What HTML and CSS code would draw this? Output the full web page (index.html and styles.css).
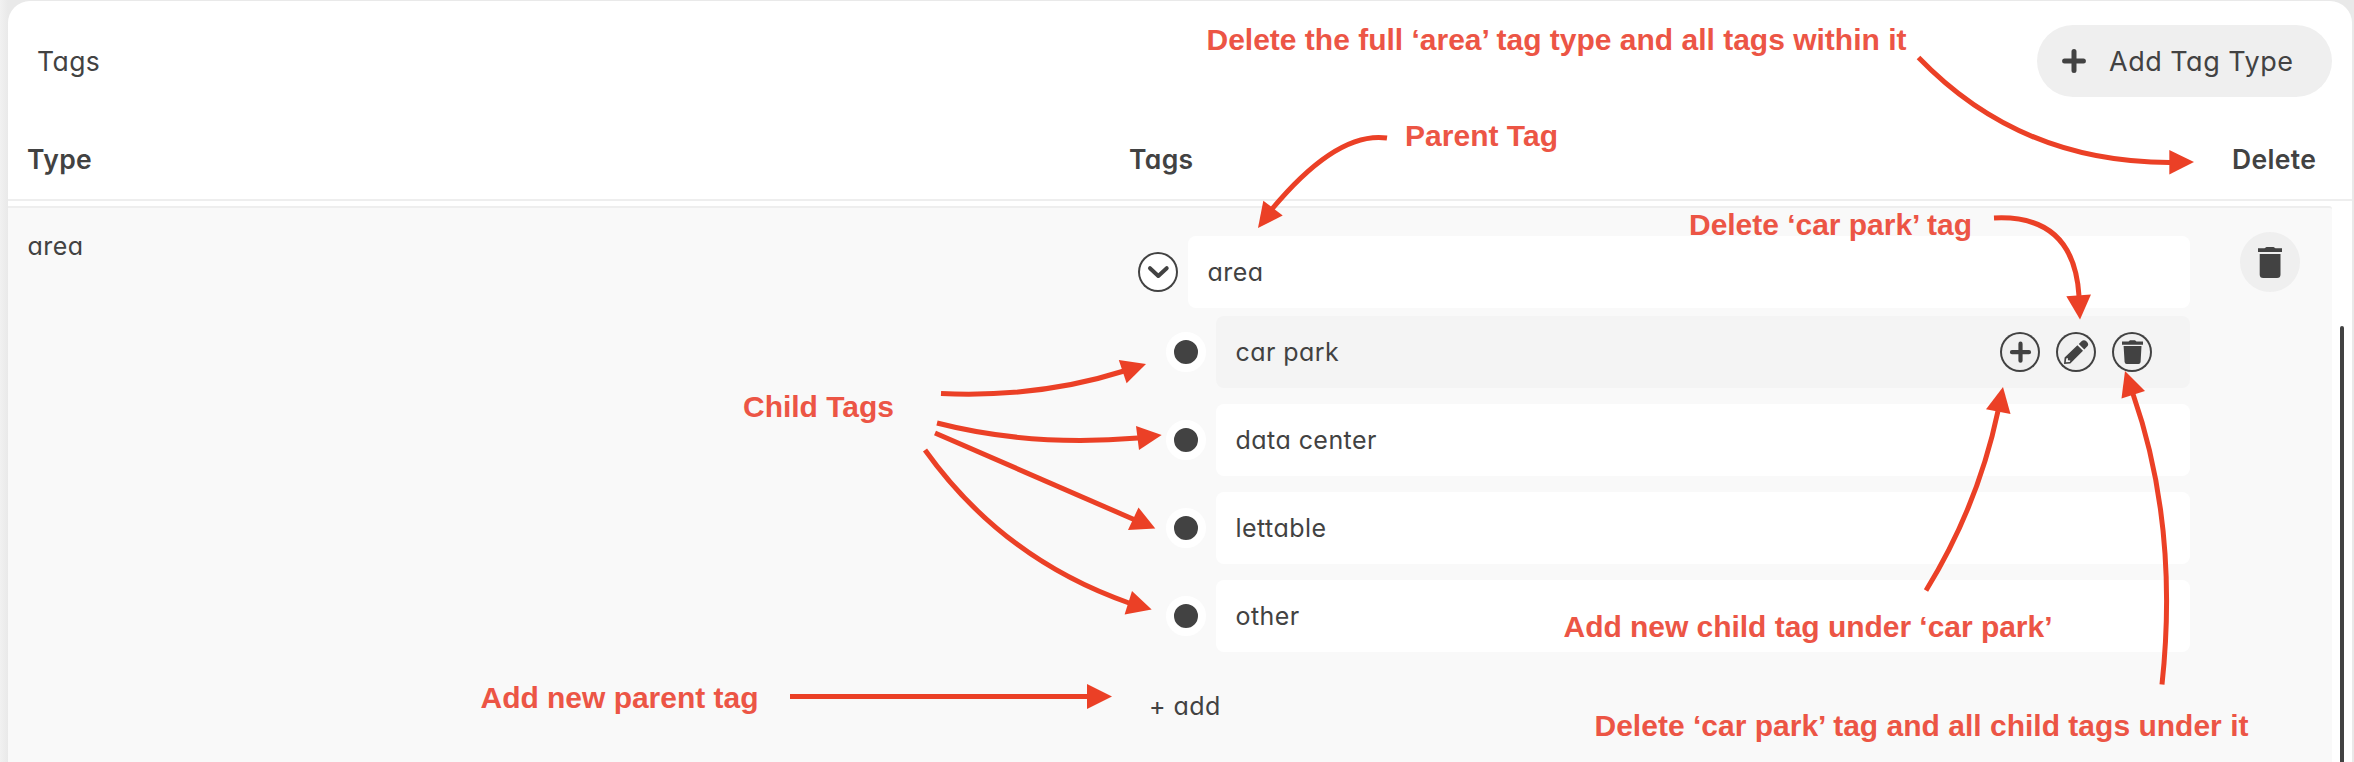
FILE: index.html
```html
<!DOCTYPE html>
<html lang="en">
<head>
<meta charset="utf-8">
<title>Tags</title>
<link rel="stylesheet" href="styles.css">
</head>
<body>
<main class="panel">
  <header class="panel-header">
    <h1 class="title">Tags</h1>
    <button class="add-type">
      <svg class="add-type-icon" viewBox="0 0 24 24"><path d="M12 2.6V21.4M2.6 12H21.4"/></svg>
      <span class="add-type-label">Add Tag Type</span>
    </button>
  </header>
  <div class="columns">
    <span>Type</span><span>Tags</span><span>Delete</span>
  </div>
  <div class="scroller">
    <section class="row">
      <div class="type-name">area</div>
      <div class="tree">
        <div class="tag-line">
          <span class="toggle"><svg viewBox="0 0 40 40"><path d="M12 16.2L20.3 24L28.7 16.2"/></svg></span>
          <div class="tag"><span>area</span></div>
        </div>
        <div class="children">
          <div class="tag-line">
            <span class="bullet"></span>
            <div class="tag active"><span>car park</span>
              <div class="actions">
                <span class="action"><svg viewBox="0 0 40 40"><path class="plus" d="M20.5 11.7V28.7M12 20.2H29"/></svg></span>
                <span class="action"><svg viewBox="0 0 40 40"><path class="solid" d="M8 32L8.6 25.6L21.4 13.2L27 18.7L14.3 31.4ZM22.8 12L25.5 9.2Q28 7 30.6 9.4Q33.2 12 31.6 14L28.3 17.4Z"/><path class="hole" d="M10.2 26.6L9.8 30.2L13.8 30L14.4 28.4L12 28.2L11.8 26Z"/></svg></span>
                <span class="action"><svg viewBox="0 0 40 40"><path class="solid" d="M10 9.5H16.5L18 8.2H23L24.5 9.5H31V12.8H10ZM11.6 14H29.5L28.6 30Q28.4 32 26.5 32H14.7Q12.8 32 12.6 30Z"/></svg></span>
              </div>
            </div>
          </div>
          <div class="tag-line"><span class="bullet"></span><div class="tag"><span>data center</span></div></div>
          <div class="tag-line"><span class="bullet"></span><div class="tag"><span>lettable</span></div></div>
          <div class="tag-line"><span class="bullet"></span><div class="tag"><span>other</span></div></div>
        </div>
        <div class="add-parent">+ add</div>
      </div>
      <div class="delete-cell">
        <span class="delete-btn"><svg viewBox="0 0 60 60"><path class="solid" d="M18 16.2H24.5L26.5 15H33.5L35.5 16.2H42V20H18ZM19.7 22H40.5V42.5Q40.5 46 37 46H23.2Q19.7 46 19.7 42.5Z"/></svg></span>
      </div>
    </section>
    <div class="scrollbar"><div class="thumb"></div></div>
  </div>
</main>
<svg class="notes" viewBox="0 0 2354 762">
  <g class="lines">
    <path d="M1918.5 57.5Q2020 163 2171 162.5"/>
    <path d="M1387 138Q1337 131 1272 209"/>
    <path d="M1994 218Q2074 214 2079 296"/>
    <path d="M941 393.5Q1039 398 1124 371"/>
    <path d="M937 423Q1030 447 1138 438"/>
    <path d="M935 433L1134 519.5"/>
    <path d="M925 450Q1003 559 1129 603"/>
    <path d="M790 696.5H1088"/>
    <path d="M1926 590.5Q1978 506 1998 411"/>
    <path d="M2162 684.5Q2179 526 2133 394"/>
  </g>
  <g class="heads">
    <path d="M2194 162L2169.3 150V174.5Z"/>
    <path d="M1258 228L1263.3 200.7L1282.7 215.5Z"/>
    <path d="M2080 319.5L2066.3 296.3L2091 294.5Z"/>
    <path d="M1146 364L1118.8 360L1126.6 383.3Z"/>
    <path d="M1161.7 435L1136 426L1139 450Z"/>
    <path d="M1155.3 528.5L1138.5 507.5L1128 530Z"/>
    <path d="M1151.7 609.5L1132 591L1124.6 614.5Z"/>
    <path d="M1112 696.5L1087 684V709Z"/>
    <path d="M2003 387L1986 409.3L2010.5 414Z"/>
    <path d="M2125 371L2121.5 398.5L2145 391Z"/>
  </g>
  <g class="captions">
    <text x="1206.5" y="50" textLength="700">Delete the full ‘area’ tag type and all tags within it</text>
    <text x="1405" y="146" textLength="153">Parent Tag</text>
    <text x="1689" y="235" textLength="283">Delete ‘car park’ tag</text>
    <text x="743" y="417" textLength="151">Child Tags</text>
    <text x="480.5" y="708" textLength="278">Add new parent tag</text>
    <text x="1563.5" y="637" textLength="489">Add new child tag under ‘car park’</text>
    <text x="1594.5" y="736" textLength="654">Delete ‘car park’ tag and all child tags under it</text>
  </g>
</svg>
</body>
</html>
```
FILE: styles.css
```css
* { box-sizing: border-box; }
body {
  margin: 0;
  height: 762px;
  padding: 1px 2px 0 8px;
  overflow: hidden;
  background: linear-gradient(90deg, #f1f1f1 0, #e9e9e9 8px, #e9e9e9);
  color: #424242;
  font-family: Inter, "Open Sans", sans-serif;
  font-feature-settings: "cv11";
  font-size: 25px;
  font-weight: 430;
  letter-spacing: 0.45px;
}
.panel {
  height: 761px;
  display: flex;
  flex-direction: column;
  background: #fff;
  border-radius: 22px 22px 0 0;
}
.panel-header {
  height: 120px;
  padding: 0 20px 0 29px;
  display: flex;
  align-items: center;
  justify-content: space-between;
}
.title { margin: 0; font-size: 26.5px; font-weight: 430; }
.add-type {
  width: 295px;
  height: 72px;
  padding: 0 0 0 25px;
  display: flex;
  align-items: center;
  gap: 23px;
  border: 0;
  border-radius: 36px;
  background: #efefef;
  color: inherit;
  font: inherit;
  font-size: 27px;
  letter-spacing: 0.5px;
}
.add-type-icon { width: 24px; height: 24px; }
.add-type-icon path { fill: none; stroke: #424242; stroke-width: 5; stroke-linecap: round; }
.columns {
  height: 80px;
  padding: 0 0 2px 19px;
  display: grid;
  grid-template-columns: 1102px 1103px 1fr;
  align-items: center;
  border-bottom: 2px solid #eee;
  font-size: 26.5px;
  font-weight: 570;
  letter-spacing: 0.35px;
}
.scroller { flex: 1; padding-top: 5px; display: flex; min-height: 0; }
.row {
  width: 2324px;
  display: grid;
  grid-template-columns: 1130px 1fr 142px;
  background: #f9f9f9;
  border-top: 2px solid #eee;
  border-top-right-radius: 3px;
}
.type-name { padding: 22px 0 0 19.5px; line-height: 32px; }
.tree { padding-top: 28px; }
.tag-line { display: flex; align-items: center; gap: 10px; }
.toggle, .action {
  width: 40px;
  height: 40px;
  border-radius: 50%;
  background: #fff;
  box-shadow: inset 0 0 0 2px #424242;
}
.toggle svg, .action svg, .delete-btn svg { display: block; }
.toggle path { fill: none; stroke: #424242; stroke-width: 4; stroke-linecap: round; stroke-linejoin: round; }
.tag {
  flex: 1;
  height: 72px;
  padding: 0 38px 0 19.5px;
  display: flex;
  align-items: center;
  justify-content: space-between;
  background: #fff;
  border-radius: 8px;
}
.active { background: #f4f4f4; }
.children { margin-top: 8px; padding-left: 28px; display: flex; flex-direction: column; gap: 16px; }
.bullet { width: 40px; height: 40px; border: 8px solid #fff; border-radius: 50%; background: #424242; }
.actions { display: flex; gap: 16px; }
.action { background: #f0f0f0; }
.solid { fill: #424242; }
.hole { fill: #f0f0f0; }
.plus { fill: none; stroke: #424242; stroke-width: 4.2; stroke-linecap: round; }
.add-parent { padding: 38px 0 0 11px; line-height: 32px; }
.delete-cell { padding: 24px 0 0 50px; }
.delete-btn { display: block; width: 60px; height: 60px; border-radius: 50%; background: #efefef; }
.scrollbar { padding: 120px 0 0 8px; display: flex; }
.thumb { width: 4px; border-radius: 2px 2px 0 0; background: #424242; }
.notes { position: absolute; left: 0; top: 0; width: 2354px; height: 762px; }
.lines { fill: none; stroke: #eb4026; stroke-width: 5; }
.heads { fill: #eb4026; }
.captions { fill: #ec5545; font: bold 30px "Liberation Sans", Arial, sans-serif; letter-spacing: 0; }
```
